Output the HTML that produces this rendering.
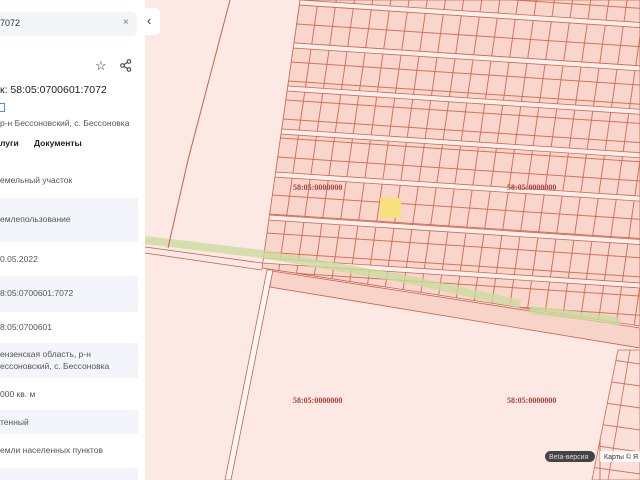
<!DOCTYPE html>
<html><head><meta charset="utf-8"><style>
body{margin:0;width:640px;height:480px;overflow:hidden;position:relative;font-family:"Liberation Sans",sans-serif;background:#fce9e3}
#map{position:absolute;left:0;top:0}
#panel{position:absolute;left:0;top:0;width:145px;height:480px;background:#fff;color:#222}
.t{position:absolute;left:0;font-size:8.5px;color:#555;white-space:nowrap}
.row{position:absolute;left:0;width:138px;background:#f4f5fa}
#btn{position:absolute;left:144px;top:8px;width:16px;height:27px;background:#fff;border-radius:0 5px 5px 0}
.lbl{font-family:"Liberation Serif",serif;font-weight:bold;font-size:8px;fill:#b23a3a}
</style></head><body>
<svg id="map" width="640" height="480">
<defs>
<pattern id="p" width="18" height="19" patternUnits="userSpaceOnUse" x="0" y="5">
<rect width="18" height="19" fill="#f8d6cc" stroke="#d8664f" stroke-width="0.9"/>
</pattern>
<pattern id="q" width="60" height="22" patternUnits="userSpaceOnUse" x="0" y="340" patternTransform="skewY(8)">
<rect width="60" height="22" fill="#fbe1d9" stroke="#d8664f" stroke-width="0.9"/>
</pattern>
<clipPath id="c"><polygon points="300,0 640,0 640,326 262,268"/></clipPath>
</defs>
<rect width="640" height="480" fill="#fce9e3"/>
<g clip-path="url(#c)">
<rect width="640" height="340" fill="#fdf0ec"/>
<g transform="matrix(1,0.066,-0.146,1,300,0)">
<rect x="-3" y="-38" width="420" height="38" fill="url(#p)" stroke="#d8664f" stroke-width=".8"/>
<rect x="-3" y="5" width="420" height="38" fill="url(#p)" stroke="#d8664f" stroke-width=".8"/>
<rect x="-3" y="48" width="420" height="38" fill="url(#p)" stroke="#d8664f" stroke-width=".8"/>
<rect x="-3" y="91" width="420" height="38" fill="url(#p)" stroke="#d8664f" stroke-width=".8"/>
<rect x="-3" y="134" width="420" height="38" fill="url(#p)" stroke="#d8664f" stroke-width=".8"/>
<rect x="-3" y="177" width="420" height="38" fill="url(#p)" stroke="#d8664f" stroke-width=".8"/>
<rect x="-3" y="220" width="420" height="38" fill="url(#p)" stroke="#d8664f" stroke-width=".8"/>
<rect x="-3" y="263" width="420" height="38" fill="url(#p)" stroke="#d8664f" stroke-width=".8"/>
<rect x="-3" y="306" width="420" height="38" fill="url(#p)" stroke="#d8664f" stroke-width=".8"/>
</g>
</g>
<polygon points="300,0 640,0 640,326 262,268" fill="none" stroke="#c86050" stroke-width=".8"/>
<polygon points="272,271 640,328 640,348 270,287" fill="#f8d3c8" stroke="#c86050" stroke-width=".8"/>
<rect x="380" y="198" width="21" height="20" fill="#f7e27a"/>
<polyline points="145,240 262,254 400,278 520,304" fill="none" stroke="#c9dc9c" stroke-width="8" opacity=".8"/>
<polyline points="530,310 600,318 620,322" fill="none" stroke="#c9dc9c" stroke-width="8" opacity=".8"/>
<polyline points="230,0 188,160 168,248" fill="none" stroke="#c86050" stroke-width="1"/>
<line x1="145" y1="247" x2="262" y2="263" stroke="#c86050" stroke-width=".8"/>
<line x1="145" y1="253" x2="262" y2="270" stroke="#c86050" stroke-width=".8"/>
<polygon points="267,270 273,270 231,480 225,480" fill="#fff8f4" stroke="#c86050" stroke-width=".8"/>
<polygon points="618,350 640,350 640,480 592,480" fill="url(#q)" stroke="#d8664f" stroke-width=".8"/>
<line x1="608" y1="480" x2="630" y2="350" stroke="#d8664f" stroke-width=".8"/>
<text class="lbl" x="293" y="190">58:05:0000000</text>
<text class="lbl" x="507" y="190">58:05:0000000</text>
<text class="lbl" x="293" y="403">58:05:0000000</text>
<text class="lbl" x="507" y="403">58:05:0000000</text>
<rect x="545" y="451" width="50" height="11" rx="5.5" fill="#444"/>
<text x="549" y="459" font-size="7" fill="#ddd" font-family="Liberation Sans">Beta-версия</text>
<rect x="600" y="451" width="40" height="11" fill="#fff" opacity=".85"/>
<text x="604" y="459" font-size="7" fill="#333" font-family="Liberation Sans">Карты © Я</text>
</svg>
<div id="panel">
<div style="position:absolute;left:0;top:12px;width:137px;height:24px;background:#f4f5f8;border-radius:0 6px 6px 0"></div>
<div class="t" style="top:18px;font-size:9px;color:#333">7072</div>
<div class="t" style="top:17px;left:123px;font-size:10px;color:#777">×</div>
<div class="t" style="top:58px;left:95px;font-size:13px;color:#333">☆</div>
<svg style="position:absolute;left:120px;top:59px" width="12" height="13"><circle cx="9" cy="2.5" r="1.8" fill="none" stroke="#333"/><circle cx="2.5" cy="6.5" r="1.8" fill="none" stroke="#333"/><circle cx="9" cy="10.5" r="1.8" fill="none" stroke="#333"/><path d="M4 5.6L7.5 3.4M4 7.4L7.5 9.6" stroke="#333"/></svg>
<div class="t" style="top:84px;font-size:10.5px;color:#222">к: 58:05:0700601:7072</div>
<div style="position:absolute;left:0;top:103px;width:4px;height:7px;border:1px solid #4b8ee8;border-left:none"></div>
<div class="t" style="top:118px">р-н Бессоновский, с. Бессоновка</div>
<div class="t" style="top:138px;font-weight:bold;color:#222">луги</div>
<div class="t" style="top:138px;left:34px;font-weight:bold;color:#222">Документы</div>
<div class="t" style="top:175px">емельный участок</div>
<div class="row" style="top:198px;height:44px"></div>
<div class="t" style="top:214px">емлепользование</div>
<div class="t" style="top:254px">0.05.2022</div>
<div class="row" style="top:276px;height:36px"></div>
<div class="t" style="top:288px">8:05:0700601:7072</div>
<div class="t" style="top:322px">8:05:0700601</div>
<div class="row" style="top:343px;height:35px"></div>
<div class="t" style="top:349px">ензенская область, р-н</div>
<div class="t" style="top:361px">ессоновский, с. Бессоновка</div>
<div class="t" style="top:389px">000 кв. м</div>
<div class="row" style="top:410px;height:24px"></div>
<div class="t" style="top:417px">тенный</div>
<div class="t" style="top:445px">емли населенных пунктов</div>
<div class="row" style="top:468px;height:12px"></div>
</div>
<div id="btn"><div style="position:absolute;left:3px;top:5px;font-size:13px;color:#333">‹</div></div>
</body></html>
